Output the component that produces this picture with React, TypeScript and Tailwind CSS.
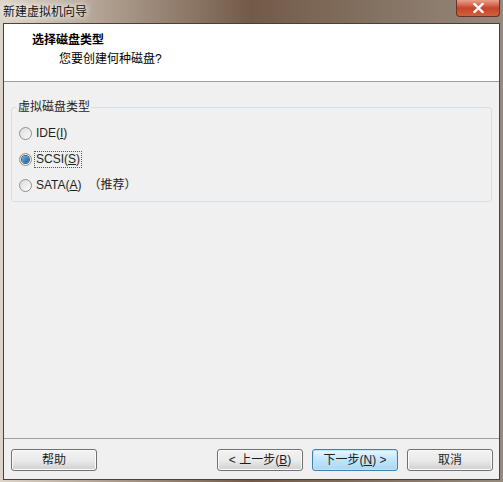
import React, { useState } from 'react';

const FONT = { fontFamily: '"Liberation Sans", "Noto Sans CJK SC", sans-serif' };

function Radio({ checked, label, accel, suffix, onClick }: { checked: boolean; label: string; accel: string; suffix?: string; onClick: () => void }) {
  return (
    <div className="flex h-[26px] items-center" onClick={onClick}>
      <span className="relative flex h-[13px] w-[13px] items-center justify-center rounded-full border border-[#8f8f8f] bg-gradient-to-br from-[#dcdcdc] to-[#fbfbfb]">
        {checked && <span className="h-[7px] w-[7px] rounded-full bg-gradient-to-br from-[#6fb1e2] to-[#1e5a94] ring-1 ring-[#2c628b]" />}
      </span>
      <span className={'ml-[3px] px-[1px] text-[12px] leading-[15px] text-[#1e1e1e] ' + (checked ? 'outline outline-1 outline-dotted outline-[#555]' : '')}>
        {label}(<span className="underline">{accel}</span>)
      </span>
      {suffix && <span className="ml-[6px] text-[12px] text-[#1e1e1e]">{suffix}</span>}
    </div>
  );
}

function Button({ children, primary }: { children: React.ReactNode; primary?: boolean }) {
  return (
    <button
      className={
        'flex h-[22px] w-[86px] items-center justify-center rounded-[3px] border text-[12px] text-[#1e1e1e] ' +
        (primary
          ? 'border-[#3c7fb1] bg-gradient-to-b from-[#eaf6fd] via-[#bee6fd] to-[#a7d9f5] shadow-[inset_0_0_0_1px_#bfe6fa]'
          : 'border-[#707070] bg-gradient-to-b from-[#f2f2f2] via-[#ebebeb] to-[#cfcfcf] shadow-[inset_0_0_0_1px_#fcfcfc]')
      }
    >
      {children}
    </button>
  );
}

export default function App() {
  const [type, setType] = useState('scsi');

  return (
    <div className="flex h-[482px] w-[503px] flex-col bg-gradient-to-r from-[#ddd5c8] via-[#735a48] to-[#958a7c]" style={FONT}>
      <div className="relative flex h-[23px] items-center">
        <span className="pl-[3px] text-[12px] text-[#111] [text-shadow:0_0_6px_#fff,0_0_8px_#fff]">新建虚拟机向导</span>
        <div className="absolute right-[3px] top-0 flex h-[17px] w-[44px] items-center justify-center rounded-b-[4px] border border-t-0 border-[#6b3028] bg-gradient-to-b from-[#e8a08c] via-[#c7432c] to-[#d0603c]">
          <svg width="11" height="10" viewBox="0 0 11 10">
            <path d="M1.5 1 L9.5 9 M9.5 1 L1.5 9" stroke="#fff" strokeWidth="2.4" strokeLinecap="square" />
          </svg>
        </div>
      </div>

      <div className="mx-[3px] mb-[2px] flex flex-1 flex-col border border-[#4a4038] bg-[#f0f0f0]">
        <div className="flex h-[58px] flex-col border-b border-[#a0a0a0] bg-white pl-[28px] pt-[8px]">
          <div className="text-[12px] font-bold leading-[16px] text-black">选择磁盘类型</div>
          <div className="mt-[3px] pl-[27px] text-[12px] leading-[16px] text-black">您要创建何种磁盘?</div>
        </div>

        <div className="flex flex-1 flex-col px-[7px] pt-[25px]">
          <div className="relative rounded-[3px] border border-[#d5dfe5] px-[7px] pb-[3px] pt-[12px]">
            <span className="absolute left-[5px] top-[-9px] bg-[#f0f0f0] px-[1px] text-[12px] leading-[16px] text-[#1e1e1e]">虚拟磁盘类型</span>
            <Radio checked={type === 'ide'} label="IDE" accel="I" onClick={() => setType('ide')} />
            <Radio checked={type === 'scsi'} label="SCSI" accel="S" onClick={() => setType('scsi')} />
            <Radio checked={type === 'sata'} label="SATA" accel="A" suffix="（推荐）" onClick={() => setType('sata')} />
          </div>
        </div>

        <div className="flex h-[41px] items-center border-t border-[#a0a0a0] pl-[7px] pr-[6px] pt-[2px]">
          <Button>帮助</Button>
          <div className="flex-1" />
          <div className="flex gap-[9px]">
            <Button>&lt; 上一步(<span className="underline">B</span>)</Button>
            <Button primary>下一步(<span className="underline">N</span>) &gt;</Button>
            <Button>取消</Button>
          </div>
        </div>
      </div>
    </div>
  );
}
